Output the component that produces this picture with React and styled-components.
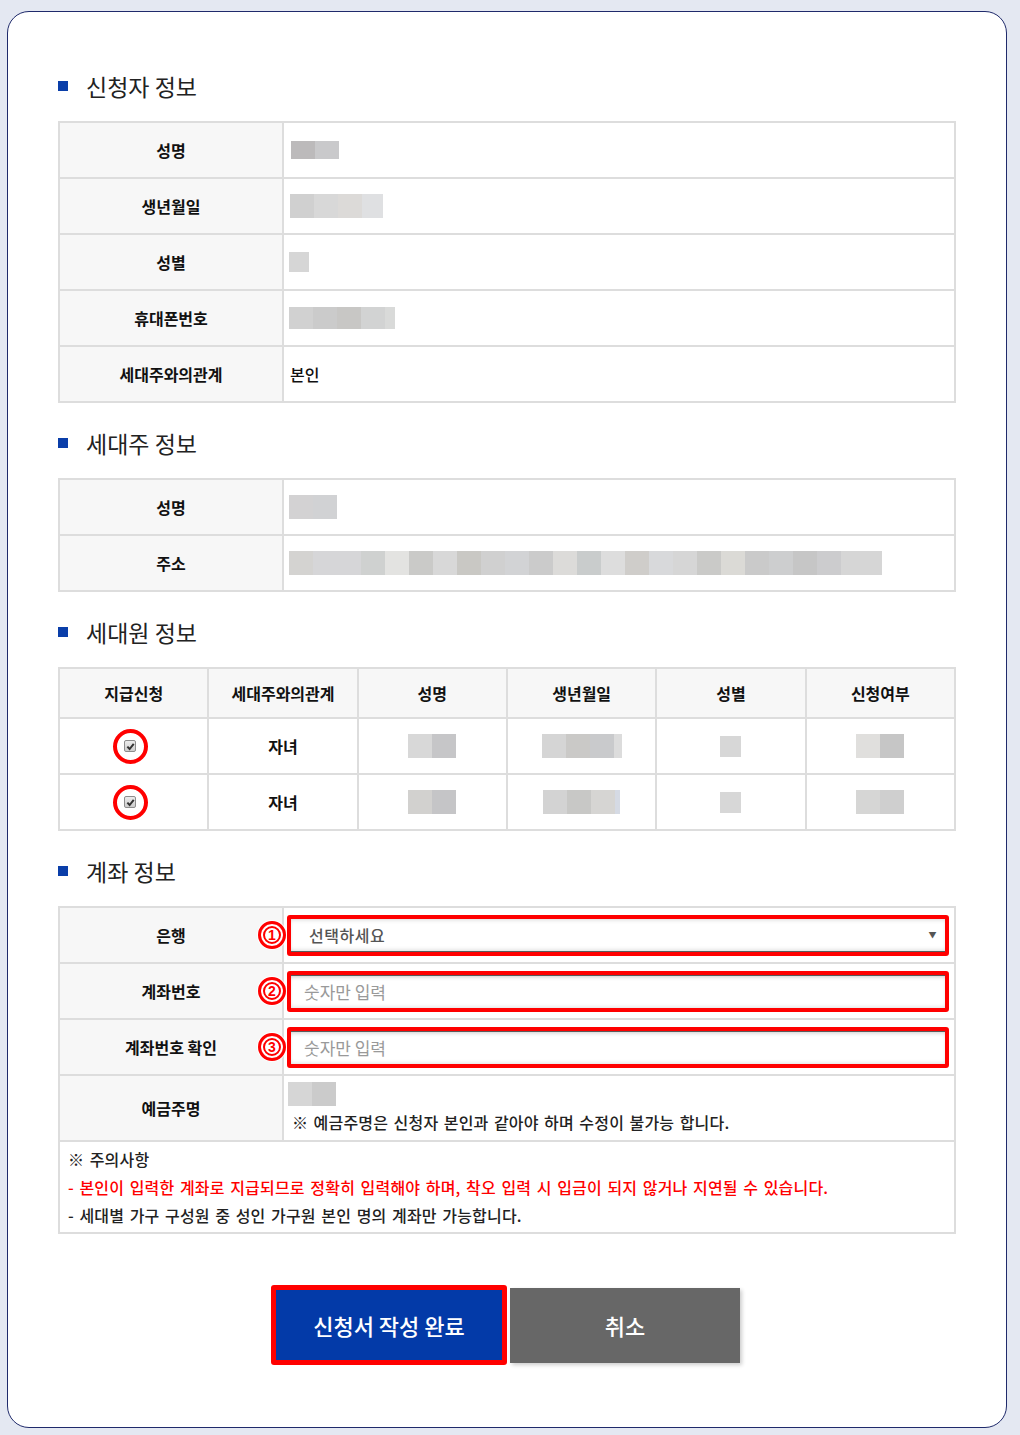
import React from 'react'
import styled, { createGlobalStyle } from 'styled-components'

const GlobalStyle = createGlobalStyle`
  *, *::before, *::after {
    box-sizing: border-box;
  }
  html, body {
    margin: 0;
    padding: 0;
    background: #e4e8f2;
  }
  body {
    font-family: "Noto Sans CJK KR", "Noto Sans", sans-serif;
    color: #111;
  }
`

const Card = styled.div`
  width: 1000px;
  margin: 11px 0 7px 7px;
  padding: 59px 50px 62px;
  background: #fff;
  border: 1px solid #1f2a6b;
  border-radius: 22px;
`

const Section = styled.section`
  & + & {
    margin-top: 25px;
  }
`

const Title = styled.h2`
  display: flex;
  align-items: center;
  height: 30px;
  margin: 0 0 20px;
  font-size: 23px;
  font-weight: normal;
  color: #222;

  &::before {
    content: '';
    width: 10px;
    height: 10px;
    margin-right: 18px;
    background: #0a3ea9;
  }
`

const Grid = styled.div`
  display: grid;
  grid-template-columns: ${p => p.$cols};
  gap: 2px;
  background: #dddddd;
  border: 2px solid #dddddd;
`

const Label = styled.div`
  display: flex;
  align-items: center;
  justify-content: center;
  height: ${p => p.$h || 54}px;
  background: #f7f7f7;
  font-size: 16px;
  font-weight: bold;
  color: #111;
`

const Value = styled.div`
  display: flex;
  align-items: center;
  height: ${p => p.$h || 54}px;
  padding: 0 6px;
  background: #fff;
  font-size: 16px;
  font-weight: ${p => (p.$bold ? 'bold' : 500)};
`

const Cell = styled(Value)`
  justify-content: center;
  padding: 0;
`

const Mosaic = styled.div`
  display: flex;
  margin-left: ${p => p.$ml || 0}px;
`

const Tile = styled.span`
  width: ${p => p.$w}px;
  height: ${p => p.$h || 24}px;
  background: ${p => p.$c};
`

const Ring = styled.span`
  display: flex;
  align-items: center;
  justify-content: center;
  width: 35px;
  height: 35px;
  margin-right: 7px;
  border: 4px solid #ff0000;
  border-radius: 50%;
`

const Check = styled.span`
  display: flex;
  align-items: center;
  justify-content: center;
  width: 12px;
  height: 12px;
  border: 1px solid #8d8d8d;
  border-radius: 2px;
  background: linear-gradient(#ececec, #cdcdcd);
`

const Field = styled.div`
  position: relative;
  flex: 1;
  height: 41px;
  margin: 0 -1px 0 -3px;
  border: 4px solid #ff0000;
  border-radius: 3px;
  display: flex;
`

const Badge = styled.span`
  position: absolute;
  left: -33px;
  top: 50%;
  transform: translateY(-50%);
  display: flex;
  align-items: center;
  justify-content: center;
  width: 28px;
  height: 28px;
  border: 3px solid #ff0000;
  border-radius: 50%;
  background: #fff;
  box-shadow: 0 0 0 1px #fff, inset 0 0 0 2px #fff, inset 0 0 0 4px #ff0000;
  color: #ff0000;
  font-family: "Liberation Sans", Arial, sans-serif;
  font-size: 14px;
  font-weight: bold;
`

const Input = styled.input`
  flex: 1;
  min-width: 0;
  border: none;
  border-top: 1px solid #5a5a5a;
  box-shadow: inset 0 3px 4px -2px rgba(0, 0, 0, 0.2), inset 0 -3px 4px -2px rgba(0, 0, 0, 0.12);
  padding: 0 0 0 13px;
  font-family: inherit;
  font-size: 17px;
  outline: none;

  &::placeholder {
    color: #999;
  }
`

const Select = styled.div`
  flex: 1;
  display: flex;
  align-items: center;
  justify-content: space-between;
  border-bottom: 1px solid #5a5a5a;
  box-shadow: inset 0 3px 4px -2px rgba(0, 0, 0, 0.15), inset 0 -3px 4px -2px rgba(0, 0, 0, 0.15);
  padding: 0 8px 0 18px;
  font-size: 16px;
  letter-spacing: 0.5px;
  color: #555;

  &::after {
    content: '▼';
    font-size: 8px;
    color: #555;
  }
`

const HolderBox = styled(Value)`
  flex-direction: column;
  align-items: flex-start;
  justify-content: space-between;
  padding: 6px 6px 6px;
`

const HolderNote = styled.p`
  margin: 0 0 0 2px;
  font-size: 16px;
  font-weight: 500;
  word-spacing: 1.6px;
  letter-spacing: 0.2px;
  color: #222;
`

const Notice = styled.div`
  grid-column: 1 / -1;
  height: 90px;
  padding: 4px 8px;
  background: #fff;
  display: flex;
  flex-direction: column;
  justify-content: space-between;
  font-size: 16px;
  font-weight: 500;
  word-spacing: 1.7px;
  letter-spacing: 0.2px;
  color: #222;
`

const Line = styled.p`
  margin: 0;
  line-height: 26px;
  color: ${p => (p.$red ? '#ff0000' : '#222')};
`

const Buttons = styled.div`
  display: flex;
  justify-content: center;
  align-items: center;
  gap: 3px;
  margin-top: 51px;
  padding-right: 3px;
`

const Button = styled.button`
  width: ${p => (p.$primary ? 236 : 230)}px;
  height: ${p => (p.$primary ? 80 : 75)}px;
  border: ${p => (p.$primary ? '5px solid #ff0000' : 'none')};
  border-radius: ${p => (p.$primary ? 3 : 0)}px;
  background: ${p => (p.$primary ? '#033aa8' : '#676767')};
  box-shadow: ${p => (p.$primary ? 'none' : '2px 2px 4px rgba(0,0,0,0.2)')};
  color: #fff;
  font-family: inherit;
  font-size: 22px;
  font-weight: 500;
  cursor: pointer;
`

const Blur = ({ tiles, h, ml }) => (
  <Mosaic $ml={ml}>
    {tiles.map(([c, w], i) => (
      <Tile key={i} $c={c} $w={w} $h={h} />
    ))}
  </Mosaic>
)

const CheckMark = () => (
  <Ring>
    <Check>
      <svg width="9" height="9" viewBox="0 0 10 10">
        <path d="M1.5 5.2 L4 7.8 L8.6 2" fill="none" stroke="#333" strokeWidth="2.2" />
      </svg>
    </Check>
  </Ring>
)

const addr = [
  '#d4d3d1', '#d6d6d8', '#d6d6d8', '#cfd1d0', '#e3e3e1', '#cacac8', '#d8d8d8', '#c9c8c4',
  '#d0d0d0', '#d2d3d5', '#cbcbcb', '#dcdbd9', '#c9cccc', '#dddddd', '#cfcdca', '#d8d9db',
  '#d6d6d6', '#cacac8', '#dbdad6', '#cacaca', '#cdcecf', '#c6c6c6', '#ccccce',
].map(c => [c, 24]).concat([['#d6d6d6', 41]])

const members = [
  {
    name: [['#d8d8d8', 24], ['#c6c6c8', 24]],
    birth: [['#d5d5d5', 24], ['#cac9c7', 24], ['#c9cacc', 24], ['#dcdcdc', 8]],
    apply: [['#e0dfdd', 24], ['#c6c6c6', 24]],
  },
  {
    name: [['#d2d1cf', 24], ['#c5c5c7', 24]],
    birth: [['#d3d3d3', 24], ['#c8c8c6', 24], ['#d6d5d3', 24], ['#d5dae4', 5]],
    apply: [['#d6d6d5', 24], ['#cfcfcf', 24]],
  },
]

export default function App() {
  return (
    <>
      <GlobalStyle />
      <Card>
        <Section>
          <Title>신청자 정보</Title>
          <Grid $cols="222px 1fr">
            <Label>성명</Label>
            <Value>
              <Blur ml={1} h={18} tiles={[['#bcbabb', 24], ['#c9c9cb', 24]]} />
            </Value>
            <Label>생년월일</Label>
            <Value>
              <Blur tiles={[['#d0d0d0', 24], ['#d8d8d8', 24], ['#dcdad8', 24], ['#dfe0e2', 21]]} />
            </Value>
            <Label>성별</Label>
            <Value>
              <Blur h={20} ml={-1} tiles={[['#d6d6d6', 20]]} />
            </Value>
            <Label>휴대폰번호</Label>
            <Value>
              <Blur h={22} ml={-1} tiles={[['#d1d1d1', 24], ['#cbcbcb', 24], ['#c8c7c5', 24], ['#d2d3d3', 24], ['#d9dad9', 10]]} />
            </Value>
            <Label>세대주와의관계</Label>
            <Value>본인</Value>
          </Grid>
        </Section>

        <Section>
          <Title>세대주 정보</Title>
          <Grid $cols="222px 1fr">
            <Label>성명</Label>
            <Value>
              <Blur ml={-1} tiles={[['#d3d2d3', 24], ['#d1d2d4', 24]]} />
            </Value>
            <Label>주소</Label>
            <Value>
              <Blur ml={-1} tiles={addr} />
            </Value>
          </Grid>
        </Section>

        <Section>
          <Title>세대원 정보</Title>
          <Grid $cols="repeat(6, 1fr)">
            {['지급신청', '세대주와의관계', '성명', '생년월일', '성별', '신청여부'].map(h => (
              <Label key={h} $h={48}>{h}</Label>
            ))}
            {members.map((m, i) => (
              <React.Fragment key={i}>
                <Cell><CheckMark /></Cell>
                <Cell $bold>자녀</Cell>
                <Cell><Blur tiles={m.name} /></Cell>
                <Cell><Blur tiles={m.birth} /></Cell>
                <Cell><Blur h={21} tiles={[['#d7d7d7', 21]]} /></Cell>
                <Cell><Blur tiles={m.apply} /></Cell>
              </React.Fragment>
            ))}
          </Grid>
        </Section>

        <Section>
          <Title>계좌 정보</Title>
          <Grid $cols="222px 1fr">
            <Label>은행</Label>
            <Value>
              <Field>
                <Badge>1</Badge>
                <Select>선택하세요</Select>
              </Field>
            </Value>
            <Label>계좌번호</Label>
            <Value>
              <Field>
                <Badge>2</Badge>
                <Input placeholder="숫자만 입력" />
              </Field>
            </Value>
            <Label>계좌번호 확인</Label>
            <Value>
              <Field>
                <Badge>3</Badge>
                <Input placeholder="숫자만 입력" />
              </Field>
            </Value>
            <Label $h={64}>예금주명</Label>
            <HolderBox $h={64}>
              <Blur ml={-2} tiles={[['#d6d6d6', 24], ['#cbcbcb', 24]]} />
              <HolderNote>※ 예금주명은 신청자 본인과 같아야 하며 수정이 불가능 합니다.</HolderNote>
            </HolderBox>
            <Notice>
              <Line>※ 주의사항</Line>
              <Line $red>- 본인이 입력한 계좌로 지급되므로 정확히 입력해야 하며, 착오 입력 시 입금이 되지 않거나 지연될 수 있습니다.</Line>
              <Line>- 세대별 가구 구성원 중 성인 가구원 본인 명의 계좌만 가능합니다.</Line>
            </Notice>
          </Grid>
        </Section>

        <Buttons>
          <Button $primary>신청서 작성 완료</Button>
          <Button>취소</Button>
        </Buttons>
      </Card>
    </>
  )
}
